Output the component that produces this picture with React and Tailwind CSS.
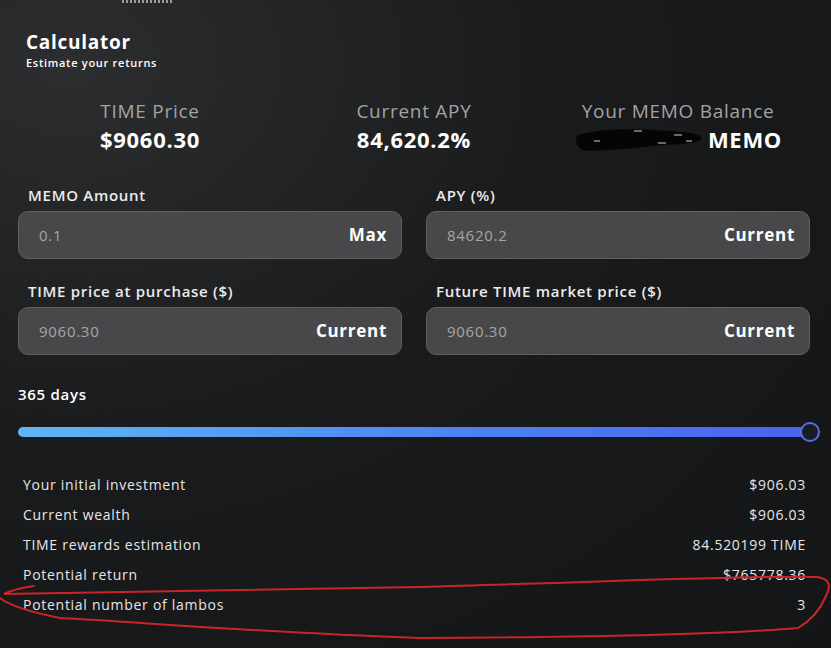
import React from 'react';

const font = { fontFamily: '"Open Sans", "Noto Sans", sans-serif', letterSpacing: '0.045em' };

const Stat = ({ label, children }) => (
  <div className="flex flex-col items-center">
    <span className="text-[19px] leading-[26px] text-[#a3a3a3]">{label}</span>
    <span className="text-[22px] leading-[30px] font-bold text-white">{children}</span>
  </div>
);

const Field = ({ label, value, action }) => (
  <div className="flex flex-col">
    <label className="text-[15px] leading-[20px] font-semibold text-[#ececec] pl-[10px] mb-[6px]">{label}</label>
    <div className="h-[48px] rounded-[10px] bg-[#48484a] border border-[#606062] flex items-center justify-between pl-[20px] pr-[14px]">
      <span className="text-[15px] text-[#a5a5a5]">{value}</span>
      <span className="text-[17px] font-bold text-white">{action}</span>
    </div>
  </div>
);

const rows = [
  ['Your initial investment', '$906.03'],
  ['Current wealth', '$906.03'],
  ['TIME rewards estimation', '84.520199 TIME'],
  ['Potential return', '$765778.36'],
  ['Potential number of lambos', '3'],
];

export default function App() {
  return (
    <div
      className="relative w-[831px] h-[648px] overflow-hidden bg-[radial-gradient(ellipse_at_8%_10%,#2c2d2e_0%,#1a1b1d_45%,#141517_100%)] text-white"
      style={font}
    >
      <div className="flex justify-center pl-[26px] w-[270px]">
        <div className="w-[52px] h-[3px] bg-[repeating-linear-gradient(90deg,#9a9a9a_0px,#9a9a9a_2px,transparent_2px,transparent_4px)]" />
      </div>

      <div className="pl-[18px] pr-[21px]">
        <div className="pl-[8px] pt-[27px]">
          <h1 className="text-[19px] leading-[24px] font-bold">Calculator</h1>
          <p className="text-[11px] leading-[16px] font-semibold mt-[1px]">Estimate your returns</p>
        </div>

        <div className="grid grid-cols-3 mt-[27px]">
          <Stat label="TIME Price">$9060.30</Stat>
          <Stat label="Current APY">84,620.2%</Stat>
          <Stat label="Your MEMO Balance">
            <span className="inline-flex items-center">
              <svg width="130" height="28" viewBox="0 0 130 28" className="mr-[4px]">
                <path d="M4 10 C30 2 70 4 95 6 C115 7 126 9 128 13 C126 18 110 19 90 20 C70 22 40 25 12 26 C2 24 0 14 4 10 Z" fill="#050505" />
                <path d="M60 6 L68 6 M100 10 L108 10 M20 16 L26 16 M84 18 L92 18 M112 16 L118 16" stroke="#cfcfcf" strokeWidth="1" />
              </svg>
              MEMO
            </span>
          </Stat>
        </div>

        <div className="grid grid-cols-2 gap-x-[24px] gap-y-[22px] mt-[26px]">
          <Field label="MEMO Amount" value="0.1" action="Max" />
          <Field label="APY (%)" value="84620.2" action="Current" />
          <Field label="TIME price at purchase ($)" value="9060.30" action="Current" />
          <Field label="Future TIME market price ($)" value="9060.30" action="Current" />
        </div>

        <div className="mt-[29px] text-[15px] leading-[20px] font-semibold">365 days</div>

        <div className="relative mt-[18px] mr-[-9px] h-[20px] flex items-center">
          <div className="flex-1 h-[10px] rounded-full bg-[linear-gradient(90deg,#5fb6f4,#4d83f2_55%,#4a62ee)]" />
          <div className="absolute right-[-1px] top-0 w-[20px] h-[20px] rounded-full border-2 border-[#5b6ee0] bg-[#1a1c24]" />
        </div>

        <div className="mt-[27px] px-[5px] pr-[4px] flex flex-col">
          {rows.map(([k, v]) => (
            <div key={k} className="flex justify-between items-center h-[30px] text-[14px] text-[#e6e6e6]">
              <span>{k}</span>
              <span>{v}</span>
            </div>
          ))}
        </div>
      </div>

      <svg className="absolute inset-0 pointer-events-none" width="831" height="648" viewBox="0 0 831 648">
        <path
          d="M34 586 C20 588 12 590 4 594 C80 592 200 591 420 587 C600 582 760 575 817 577 C832 579 830 588 826 596 C820 610 812 620 798 628 C740 633 600 637 420 638 C250 632 140 622 60 618 C30 612 10 606 0 598"
          fill="none"
          stroke="#c8252b"
          strokeWidth="2"
          strokeLinecap="round"
        />
      </svg>
    </div>
  );
}
